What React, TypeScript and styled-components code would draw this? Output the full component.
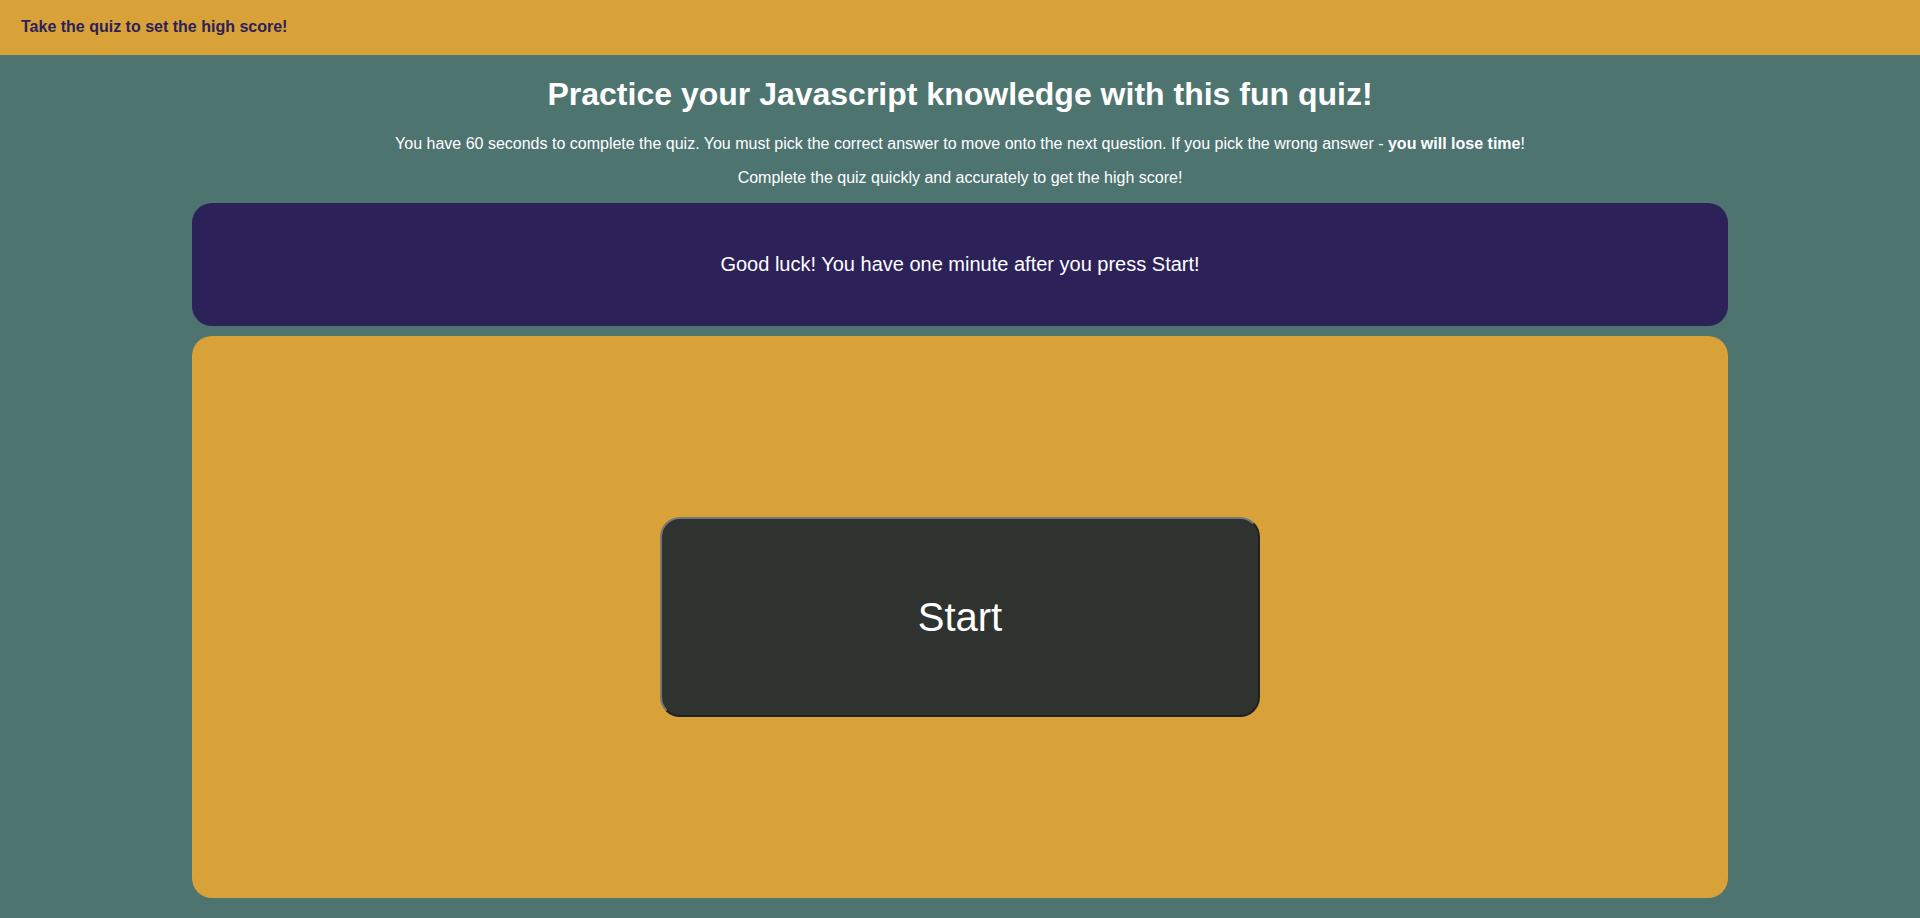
import React from "react";
import styled, { createGlobalStyle } from "styled-components";

const Global = createGlobalStyle`
  html, body {
    margin: 0;
    padding: 0;
    background: #4e7470;
    font-family: "Liberation Sans", Arial, sans-serif;
    color: #ffffff;
  }
`;

const Header = styled.header`
  height: 55px;
  background: #d9a239;
  display: flex;
  align-items: center;
  padding: 0 21px 2px;
  box-sizing: border-box;
`;

const HeaderText = styled.span`
  font-size: 16px;
  font-weight: bold;
  color: #2c2159;
`;

const Main = styled.main`
  display: flex;
  flex-direction: column;
  align-items: center;
`;

const Title = styled.h1`
  font-size: 32px;
  font-weight: bold;
  margin: 21px 0 0;
  line-height: 37px;
  text-align: center;
`;

const Intro = styled.p<{ $top: number }>`
  font-size: 16px;
  line-height: 18px;
  margin: ${(p) => p.$top}px 0 0;
  text-align: center;
`;

const Card = styled.section<{ $bg: string; $height: number; $top: number }>`
  width: 80%;
  height: ${(p) => p.$height}px;
  margin-top: ${(p) => p.$top}px;
  background: ${(p) => p.$bg};
  border-radius: 20px;
  display: flex;
  align-items: center;
  justify-content: center;
`;

const Message = styled.p`
  font-size: 20px;
  margin: 0;
`;

const StartButton = styled.button`
  width: 600px;
  height: 200px;
  background: #2f332f;
  color: #ffffff;
  font-family: "Liberation Sans", Arial, sans-serif;
  font-size: 40px;
  border: 2px outset #767676;
  border-radius: 20px;
  cursor: pointer;
`;

export default function App() {
  return (
    <>
      <Global />
      <Header>
        <HeaderText>Take the quiz to set the high score!</HeaderText>
      </Header>
      <Main>
        <Title>Practice your Javascript knowledge with this fun quiz!</Title>
        <Intro $top={22}>
          You have 60 seconds to complete the quiz. You must pick the correct answer to move onto the
          next question. If you pick the wrong answer - <b>you will lose time</b>!
        </Intro>
        <Intro $top={16}>Complete the quiz quickly and accurately to get the high score!</Intro>
        <Card $bg="#2c2159" $height={123} $top={16}>
          <Message>Good luck! You have one minute after you press Start!</Message>
        </Card>
        <Card $bg="#d9a239" $height={562} $top={10}>
          <StartButton>Start</StartButton>
        </Card>
      </Main>
    </>
  );
}
